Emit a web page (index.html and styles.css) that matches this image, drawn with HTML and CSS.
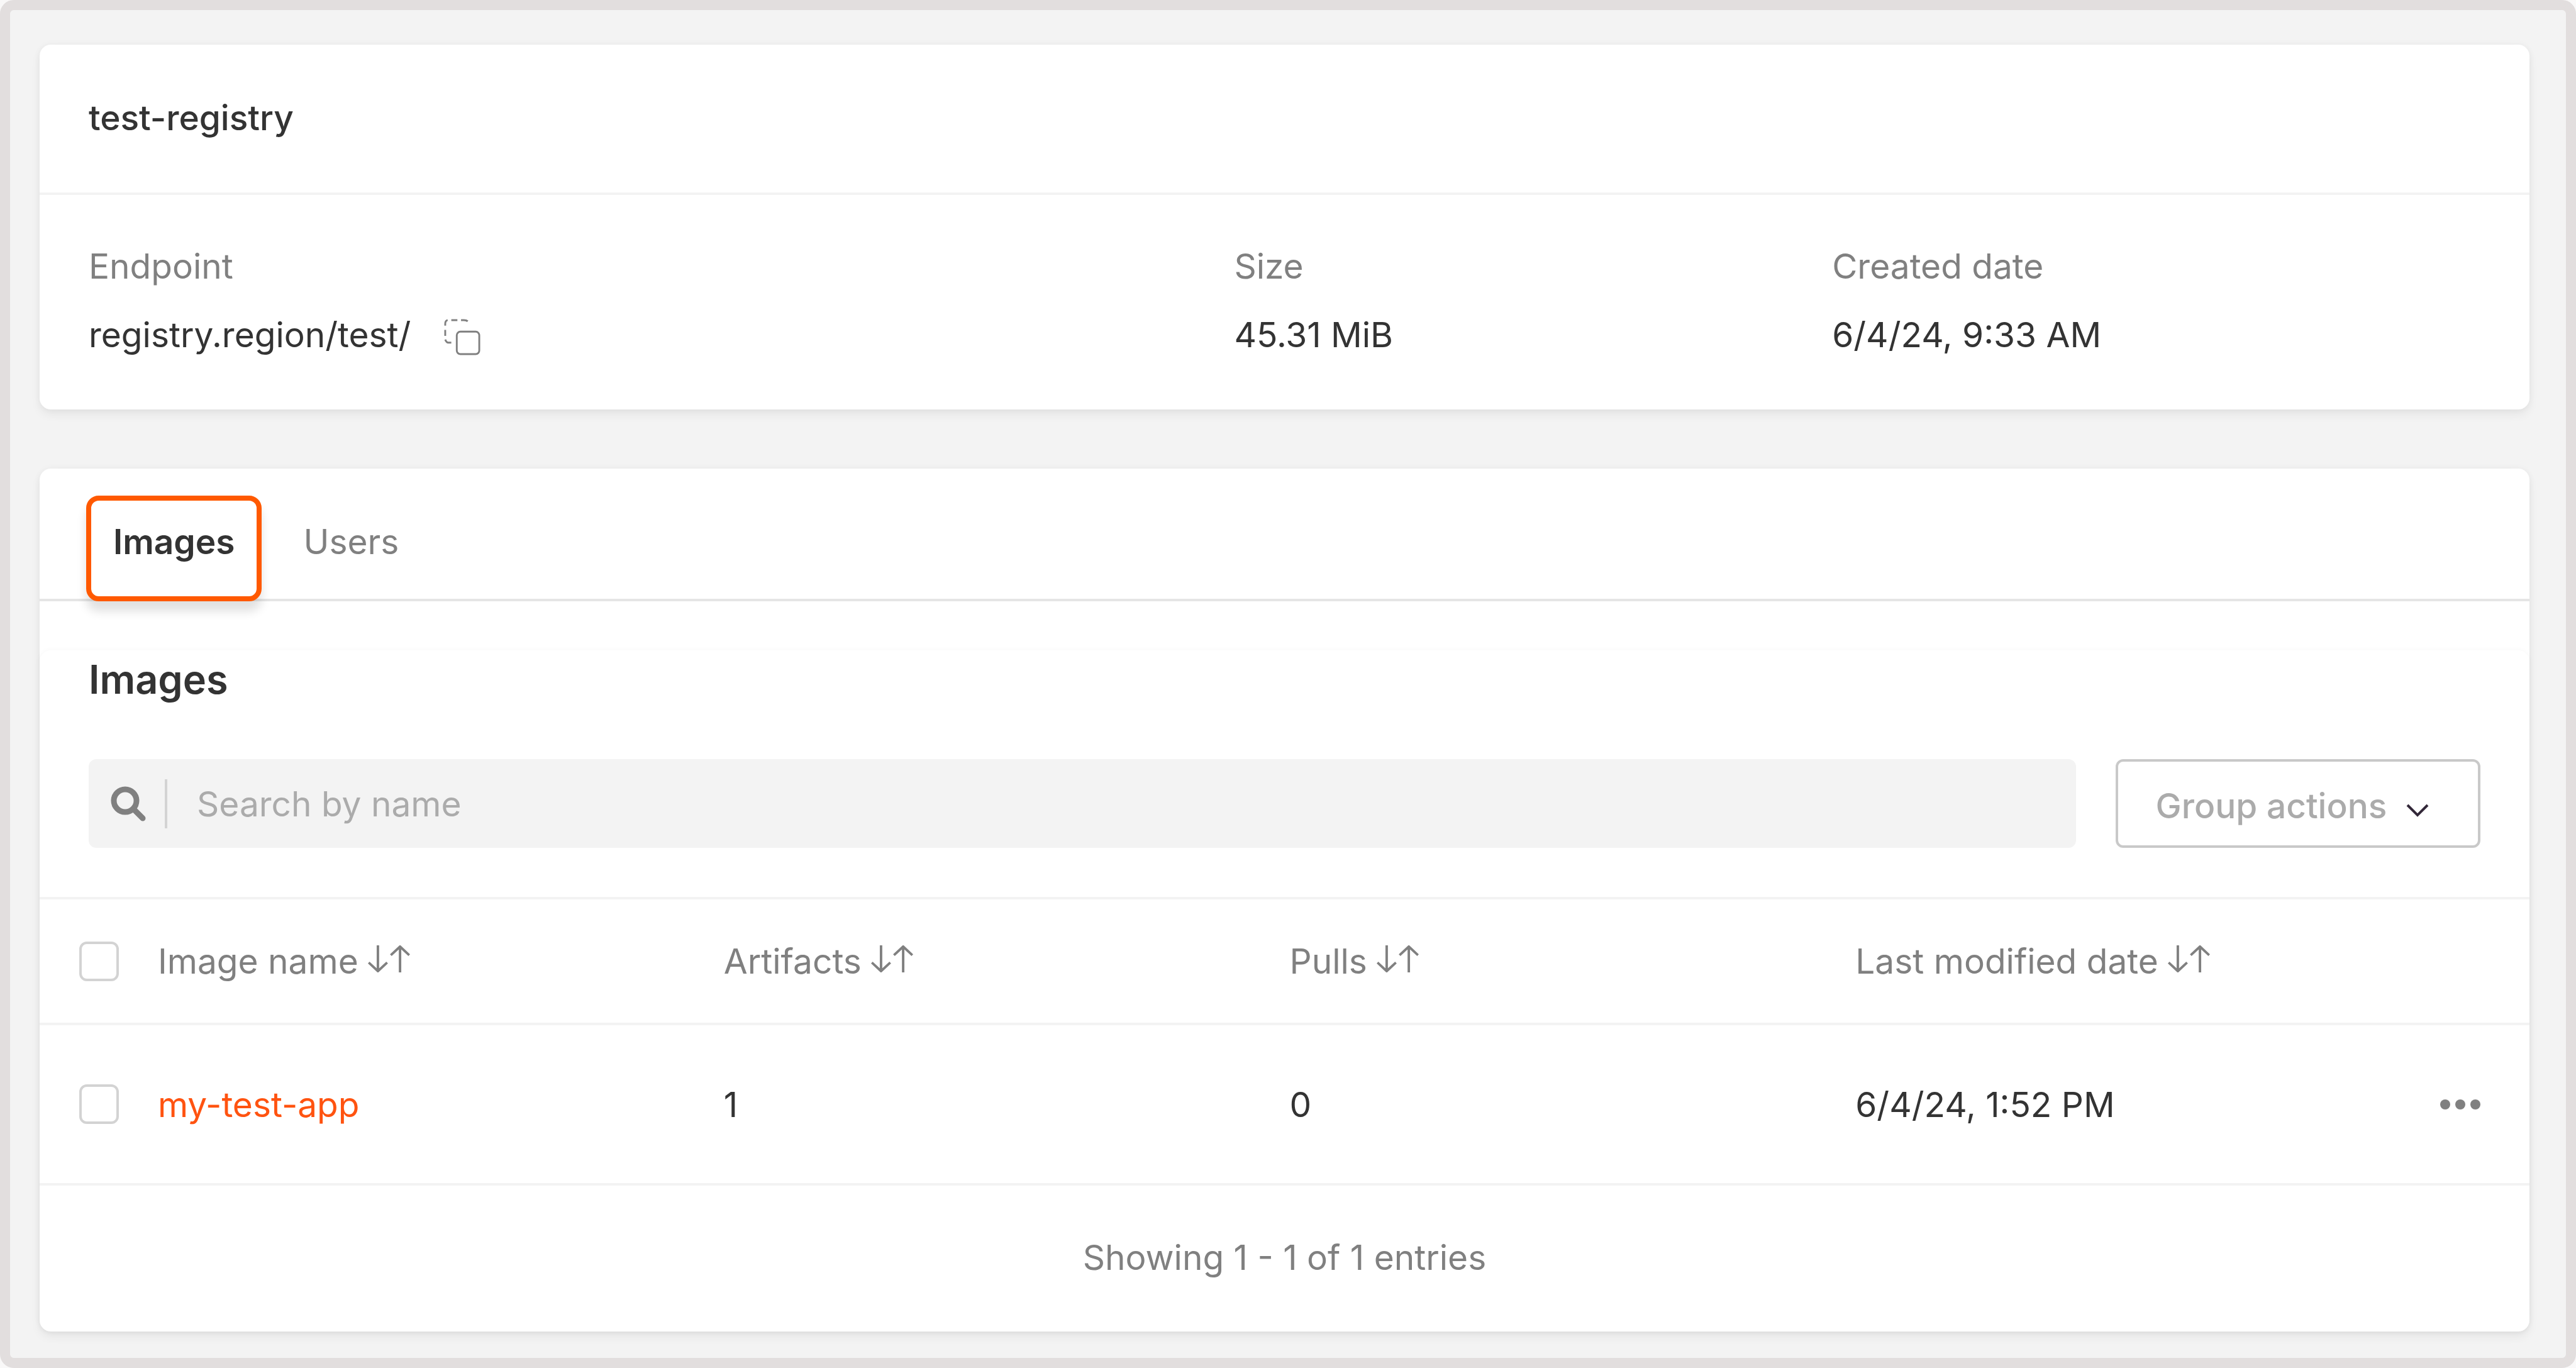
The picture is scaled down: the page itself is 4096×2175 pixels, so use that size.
FILE: index.html
```html
<!DOCTYPE html>
<html lang="en">
<head>
<meta charset="utf-8">
<title>test-registry</title>
<link rel="stylesheet" href="styles.css">
</head>
<body>
<svg class="defs" aria-hidden="true">
  <symbol id="sort" viewBox="0 0 68 44">
    <path d="M16 0v42M1 28l15 14 15-14M52 44V2M37 16L52 2l15 14"/>
  </symbol>
</svg>
<main class="page">
  <section class="card">
    <h1 class="registry-name">test-registry</h1>
    <dl class="details">
      <div class="detail">
        <dt>Endpoint</dt>
        <dd>registry.region/test/
          <button class="copy" type="button" aria-label="Copy endpoint">
            <svg viewBox="0 0 60 60" width="58" height="58"><rect x="21" y="21" width="37" height="37" rx="6"/><path d="M2 11V8q0-5 4-6M12 2h10M28 2h5q4 0 6 2M2 18v10M2 34q2 5 5 5h5"/></svg>
          </button>
        </dd>
      </div>
      <div class="detail"><dt>Size</dt><dd>45.31 MiB</dd></div>
      <div class="detail"><dt>Created date</dt><dd>6/4/24, 9:33 AM</dd></div>
    </dl>
  </section>

  <section class="card">
    <nav class="tabs">
      <a class="tab tab-active" href="#images">Images</a>
      <a class="tab" href="#users">Users</a>
    </nav>
    <div class="panel" id="images">
      <h2 class="panel-title">Images</h2>
      <div class="toolbar">
        <label class="search">
          <svg class="search-icon" viewBox="0 0 56 56" width="56" height="56" aria-hidden="true"><circle cx="23" cy="23" r="18"/><path d="M37 37l14 14"/></svg>
          <input class="search-input" type="text" placeholder="Search by name" aria-label="Search by name">
        </label>
        <button class="group-actions" type="button">Group actions
          <svg class="chevron" viewBox="0 0 36 22" width="36" height="22" aria-hidden="true"><path d="M2 2l16 16L34 2"/></svg>
        </button>
      </div>
      <table class="images">
        <thead>
          <tr>
            <th class="col-check"><input class="check" type="checkbox" aria-label="Select all images"></th>
            <th>Image name <svg class="sort"><use href="#sort"/></svg></th>
            <th>Artifacts <svg class="sort"><use href="#sort"/></svg></th>
            <th>Pulls <svg class="sort"><use href="#sort"/></svg></th>
            <th>Last modified date <svg class="sort"><use href="#sort"/></svg></th>
            <th class="col-menu"></th>
          </tr>
        </thead>
        <tbody>
          <tr>
            <td class="col-check"><input class="check" type="checkbox" aria-label="Select my-test-app"></td>
            <td><a class="image-link" href="#my-test-app">my-test-app</a></td>
            <td>1</td>
            <td>0</td>
            <td>6/4/24, 1:52 PM</td>
            <td class="col-menu">
              <button class="menu" type="button" aria-label="Image actions"><svg viewBox="0 0 64 16" width="64" height="16"><circle cx="8" cy="8" r="8"/><circle cx="32" cy="8" r="8"/><circle cx="56" cy="8" r="8"/></svg></button>
            </td>
          </tr>
        </tbody>
      </table>
      <p class="summary">Showing 1 - 1 of 1 entries</p>
    </div>
  </section>
</main>
</body>
</html>
```
FILE: styles.css
```css
* { box-sizing: border-box; }

html { background: #f9f8f8; }

body {
  margin: 0;
  color: #333;
  font: 400 55px/78px Inter, "Liberation Sans", sans-serif;
  font-optical-sizing: none;
}

h1, h2, p, dl, dd { margin: 0; }

button, input { font: inherit; font-optical-sizing: inherit; }

button { padding: 0; border: 0; background: none; }

svg { fill: none; stroke: #808080; }

.defs { display: block; width: 0; height: 0; }

.page {
  display: flex;
  flex-direction: column;
  gap: 94px;
  min-height: 100vh;
  padding: 55px 58px 42px 47px;
  border: 16px solid #e2dede;
  border-radius: 22px;
  background: #f3f3f3;
}

.card {
  border-radius: 18px;
  background: #fff;
  box-shadow: 0 8px 16px rgba(0, 0, 0, .06), 0 0 12px rgba(0, 0, 0, .04);
}

.registry-name {
  padding: 77px 78px 80px;
  border-bottom: 4px solid #f3f3f3;
  font-size: 55px;
  font-weight: 500;
}

.details {
  display: grid;
  grid-template-columns: 1820fr 950fr 1030fr;
  padding: 74px 78px 80px;
}

.detail { display: grid; gap: 31px; }

.detail dt { color: #808080; }

.detail dd { display: flex; align-items: center; gap: 53px; }

.copy { display: flex; margin-top: 8px; }

.copy svg { stroke-width: 3; }

.tabs {
  display: flex;
  height: 211px;
  padding: 0 86px;
  gap: 47px;
  border-bottom: 4px solid #e5e5e5;
}

.tab {
  padding: 77px 31px 0;
  color: #808080;
  text-decoration: none;
}

.tab-active {
  position: relative;
  color: #333;
  font-weight: 600;
}

.tab-active::after {
  content: "";
  position: absolute;
  inset: 43px -12px -4px;
  border: 8px solid #ff5900;
  border-radius: 20px;
  box-shadow: 0 16px 16px rgba(0, 0, 0, .12);
}

.panel {
  margin-top: 78px;
  border-radius: 18px;
  box-shadow: 0 0 8px rgba(0, 0, 0, .04);
}

.panel-title {
  padding: 7px 78px 0;
  font-size: 63px;
  font-weight: 600;
  line-height: 78px;
}

.toolbar {
  display: flex;
  gap: 63px;
  padding: 88px 78px 78px;
}

.search {
  display: flex;
  flex: 1;
  align-items: center;
  height: 141px;
  padding-left: 35px;
  border-radius: 12px;
  background: #f3f3f3;
}

.search-icon { stroke-width: 9; stroke-linecap: round; }

.search-input {
  flex: 1;
  height: 78px;
  margin-left: 30px;
  padding: 0 0 0 47px;
  border: 0;
  border-left: 4px solid #d3d3d3;
  background: none;
}

.search-input::placeholder { color: #ababab; opacity: 1; }

.group-actions {
  display: flex;
  align-items: center;
  justify-content: center;
  gap: 31px;
  width: 580px;
  height: 141px;
  padding: 7px 18px 0 0;
  border: 4px solid #c9c9c9;
  border-radius: 12px;
  color: #ababab;
  font-weight: 500;
}

.chevron { margin-top: 16px; stroke: #332839; stroke-width: 4; }

.images {
  width: 100%;
  border-collapse: collapse;
  table-layout: fixed;
}

.images th, .images td {
  height: 253px;
  padding: 0;
  border-top: 4px solid #f3f3f3;
  text-align: left;
  font-weight: 400;
}

.images th { height: 200px; color: #808080; }

.images .col-check { width: 188px; padding-left: 63px; }

.images .col-menu { width: 172px; padding-right: 78px; }

.check {
  display: block;
  width: 63px;
  height: 63px;
  margin: 0;
  appearance: none;
  border: 4px solid #d3d3d3;
  border-radius: 12px;
  background: #fff;
}

.sort { width: 67px; height: 43px; margin-bottom: 2px; stroke-width: 4; }

.image-link { color: #ff5310; text-decoration: none; }

.menu { display: flex; margin-left: auto; }

.menu svg { display: block; fill: #808080; stroke: none; }

.summary {
  padding: 75px 0 79px;
  border-top: 4px solid #f3f3f3;
  color: #808080;
  text-align: center;
}
```
